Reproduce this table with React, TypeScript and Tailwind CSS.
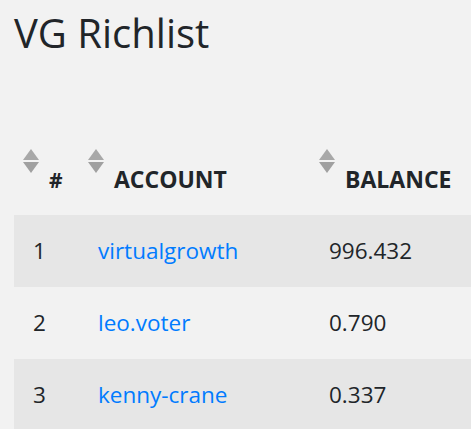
import React from 'react';

const rows = [
  { rank: 1, account: 'virtualgrowth', balance: '996.432' },
  { rank: 2, account: 'leo.voter', balance: '0.790' },
  { rank: 3, account: 'kenny-crane', balance: '0.337' },
];

function SortIcon() {
  return (
    <svg width="16" height="24" viewBox="0 0 16 24" className="shrink-0 self-start">
      <polygon points="8,0 16,11 0,11" fill="#a8a8a8" />
      <polygon points="0,13 16,13 8,24" fill="#a0a0a0" />
    </svg>
  );
}

function HeadCell({ label, width, small }: { label: string; width: string; small?: boolean }) {
  return (
    <th className={`${width} p-0 pl-[9px] pb-[24px] align-bottom text-left`}>
      <div className="flex h-[42px] items-end gap-[10px]">
        <SortIcon />
        <span className={`${small ? 'text-[21px]' : 'text-[23px]'} font-bold uppercase leading-none text-[#212529]`}>
          {label}
        </span>
      </div>
    </th>
  );
}

export default function App() {
  return (
    <div className="min-h-screen overflow-hidden bg-[#f2f2f2] pl-[14px] font-['Open_Sans',sans-serif] text-[#212529]">
      <h1 className="pt-[9px] text-[40px] leading-[1.2] font-normal">VG Richlist</h1>

      <table className="mt-[92px] w-full border-collapse">
        <thead>
          <tr>
            <HeadCell label="#" width="w-[65px]" small />
            <HeadCell label="Account" width="w-[231px]" />
            <HeadCell label="Balance" width="" />
          </tr>
        </thead>
        <tbody>
          {rows.map((row, i) => (
            <tr key={row.rank} className={i % 2 === 0 ? 'bg-[#e6e6e6]' : ''}>
              <td className="h-[72px] pl-[19px] text-[22.5px]">{row.rank}</td>
              <td className="h-[72px] pl-[19px] text-[22.5px]">
                <a href="#" className="text-[#007bff]">{row.account}</a>
              </td>
              <td className="h-[72px] pl-[19px] text-[22.5px]">{row.balance}</td>
            </tr>
          ))}
        </tbody>
      </table>
    </div>
  );
}
